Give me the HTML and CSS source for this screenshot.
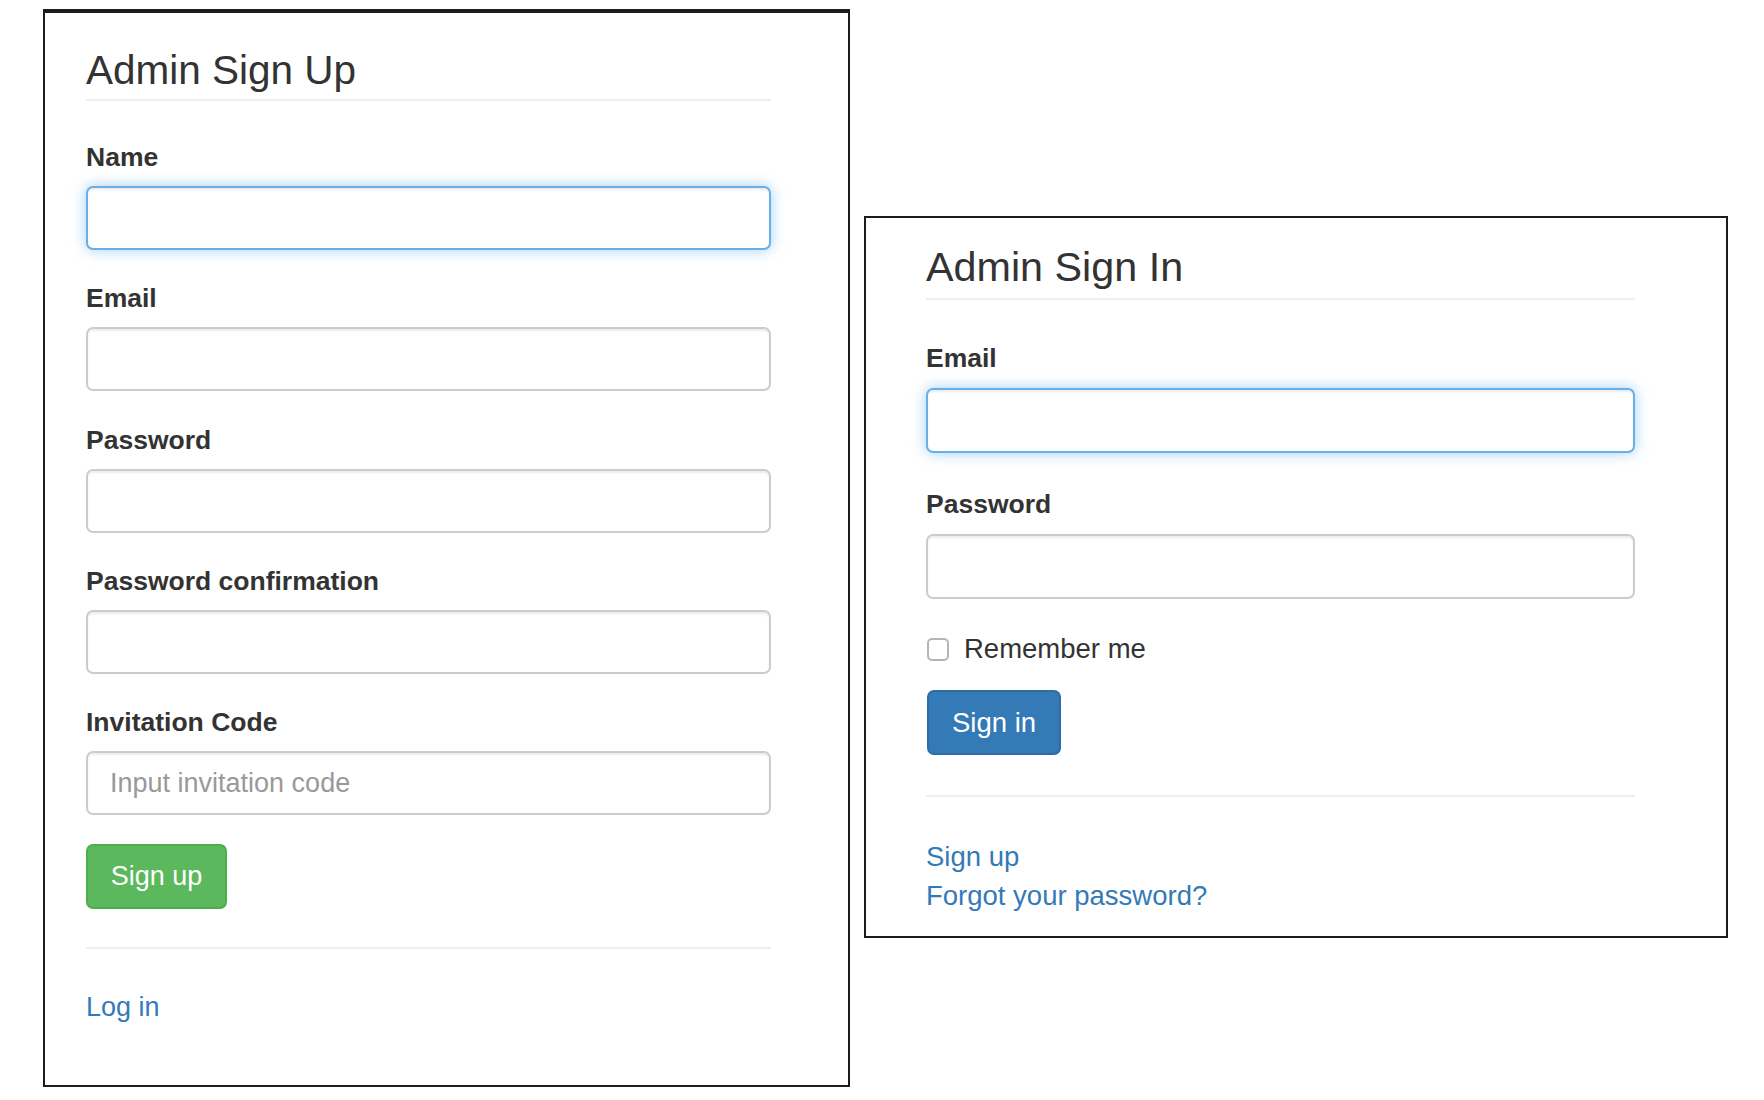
FILE: index.html
```html
<!DOCTYPE html>
<html lang="en">
<head>
<meta charset="utf-8">
<title>Admin Sign Up / Sign In</title>
<link rel="stylesheet" href="styles.css">
</head>
<body>
<div class="page">
  <section class="panel panel-signup">
    <h3 class="page-header">Admin Sign Up</h3>
    <form class="form">
      <div class="form-group">
        <label class="label">Name</label>
        <input class="input input-focus" type="text">
      </div>
      <div class="form-group">
        <label class="label">Email</label>
        <input class="input" type="email">
      </div>
      <div class="form-group">
        <label class="label">Password</label>
        <input class="input" type="password">
      </div>
      <div class="form-group">
        <label class="label">Password confirmation</label>
        <input class="input" type="password">
      </div>
      <div class="form-group">
        <label class="label">Invitation Code</label>
        <input class="input" type="text" placeholder="Input invitation code">
      </div>
      <button type="button" class="btn btn-success">Sign up</button>
    </form>
    <hr class="rule">
    <div class="links">
      <a class="link" href="#">Log in</a>
    </div>
  </section>

  <section class="panel panel-signin">
    <h3 class="page-header">Admin Sign In</h3>
    <form class="form">
      <div class="form-group">
        <label class="label">Email</label>
        <input class="input input-focus" type="email">
      </div>
      <div class="form-group">
        <label class="label">Password</label>
        <input class="input" type="password">
      </div>
      <div class="checkbox-row">
        <span class="checkbox"></span>
        <span class="checkbox-label">Remember me</span>
      </div>
      <button type="button" class="btn btn-primary">Sign in</button>
    </form>
    <hr class="rule">
    <div class="links">
      <a class="link" href="#">Sign up</a>
      <a class="link" href="#">Forgot your password?</a>
    </div>
  </section>
</div>
</body>
</html>
```

FILE: styles.css
```css
* {
  box-sizing: border-box;
}

html, body {
  margin: 0;
  padding: 0;
  background: #ffffff;
}

body {
  font-family: "Liberation Sans", Arial, Helvetica, sans-serif;
  color: #333333;
}

.page {
  display: flex;
  align-items: flex-start;
  gap: 14px;
  padding: 9px 0 0 43px;
}

.panel {
  background: #ffffff;
  border: 2px solid #1c1c1c;
  display: flex;
  flex-direction: column;
}

.panel-signup {
  width: 807px;
  border-top-width: 4px;
  padding: 32px 77px 59px 41px;
  --input-h: 64px;
  --group-mb: 29.3px;
  --label-mb: 10px;
  --fs: 27px;
}

.panel-signin {
  width: 864px;
  margin-top: 207px;
  padding: 24px 91px 21px 60px;
  --input-h: 65px;
  --group-mb: 32px;
  --label-mb: 11px;
  --fs: 27.5px;
}

.page-header {
  margin: 0;
  font-size: 40.5px;
  font-weight: 400;
  line-height: 50px;
  color: #333333;
  padding-bottom: 4px;
  border-bottom: 2px solid #eeeeee;
}

.panel-signin .page-header {
  font-size: 41.3px;
  padding-bottom: 6px;
}

.form {
  display: flex;
  flex-direction: column;
  align-items: flex-start;
  margin-top: 37px;
}

.panel-signin .form {
  margin-top: 39px;
}

.form-group {
  display: flex;
  flex-direction: column;
  width: 100%;
  margin-bottom: var(--group-mb);
}

.label {
  font-size: 26.5px;
  font-weight: 700;
  line-height: 38px;
  margin-bottom: var(--label-mb);
  color: #333333;
}

.input {
  display: block;
  width: 100%;
  height: var(--input-h);
  padding: 0 22px;
  font-family: "Liberation Sans", Arial, Helvetica, sans-serif;
  font-size: var(--fs);
  color: #555555;
  background: #ffffff;
  border: 2px solid #cccccc;
  border-radius: 7px;
  box-shadow: inset 0 2px 2px rgba(0, 0, 0, 0.075);
  outline: none;
}

.input::placeholder {
  color: #999999;
}

.input-focus {
  border-color: #66afe9;
  box-shadow: inset 0 2px 2px rgba(0, 0, 0, 0.075), 0 0 14px rgba(102, 175, 233, 0.6);
}

.checkbox-row {
  display: flex;
  align-items: center;
  height: 38px;
  margin-top: -1px;
  margin-bottom: 22px;
}

.checkbox {
  width: 22px;
  height: 23px;
  border: 2px solid #b5b5b5;
  border-radius: 5px;
  background: #ffffff;
  margin-left: 1px;
  margin-right: 15px;
}

.checkbox-label {
  font-size: var(--fs);
  color: #333333;
}

.btn {
  display: inline-flex;
  align-items: center;
  justify-content: center;
  white-space: nowrap;
  font-family: "Liberation Sans", Arial, Helvetica, sans-serif;
  font-size: var(--fs);
  color: #ffffff;
  border-radius: 7px;
  border: 2px solid transparent;
  padding: 0;
  cursor: pointer;
}

.btn-success {
  height: 65px;
  width: 141px;
  background: #5cb85c;
  border-color: #4cae4c;
}

.btn-primary {
  height: 65px;
  width: 134px;
  margin-left: 1px;
  background: #337ab7;
  border-color: #2e6da4;
}

.rule {
  margin: 38px 0 0 0;
  border: 0;
  border-top: 2px solid #eeeeee;
  height: 0;
}

.panel-signin .rule {
  margin-top: 40px;
}

.links {
  display: flex;
  flex-direction: column;
  align-items: flex-start;
  margin-top: 39px;
}

.panel-signin .links {
  margin-top: 40px;
}

.link {
  font-size: var(--fs);
  line-height: 38px;
  color: #337ab7;
  text-decoration: none;
}

.panel-signin .link {
  line-height: 39px;
}
```
